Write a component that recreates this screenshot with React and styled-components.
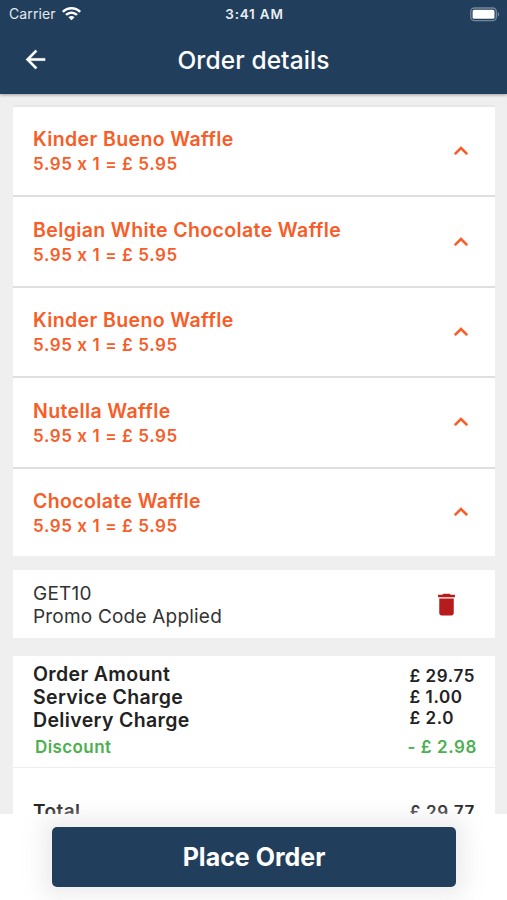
import styled, { createGlobalStyle } from "styled-components";

const items = [
      "Kinder Bueno Waffle",
      "Belgian White Chocolate Waffle",
      "Kinder Bueno Waffle",
      "Nutella Waffle",
      "Chocolate Waffle",
];

const App = () => {
      return (
            <Screen>
                  <GlobalStyle />
                  <Header>
                        <StatusBar>
                              <Carrier>
                                    Carrier
                                    <WifiIcon />
                              </Carrier>
                              <Clock>3:41 AM</Clock>
                              <BatteryIcon />
                        </StatusBar>
                        <NavBar>
                              <BackButton aria-label="Back">
                                    <svg width="29" height="29" viewBox="0 0 24 24" fill="#fff" stroke="#fff" strokeWidth="0.2">
                                          <path d="M20 11H7.83l5.59-5.59L12 4l-8 8 8 8 1.41-1.41L7.83 13H20v-2z" />
                                    </svg>
                              </BackButton>
                              <Title>Order details</Title>
                        </NavBar>
                  </Header>

                  <Content>
                        <ItemList>
                              {items.map((name, i) => (
                                    <Item key={i}>
                                          <ItemText>
                                                <ItemName>{name}</ItemName>
                                                <ItemPrice>5.95 x 1 = £ 5.95</ItemPrice>
                                          </ItemText>
                                          <svg width="28" height="28" viewBox="0 0 24 24" fill="#f85c27" stroke="#f85c27" strokeWidth="0.2">
                                                <path d="M12 8l-6 6 1.41 1.41L12 10.83l4.59 4.58L18 14z" />
                                          </svg>
                                    </Item>
                              ))}
                        </ItemList>

                        <Promo>
                              <div>
                                    <PromoText $spacing="0.25px">GET10</PromoText>
                                    <PromoText $spacing="0.2px">Promo Code Applied</PromoText>
                              </div>
                              <svg width="29" height="29" viewBox="0 0 24 24" fill="#b71c1c">
                                    <path d="M6 19c0 1.1.9 2 2 2h8c1.1 0 2-.9 2-2V7H6v12zM19 4h-3.5l-1-1h-5l-1 1H5v2h14V4z" />
                              </svg>
                        </Promo>

                        <Summary>
                              <Charges>
                                    <Labels>
                                          <li>Order Amount</li>
                                          <li>Service Charge</li>
                                          <li>Delivery Charge</li>
                                    </Labels>
                                    <Amounts>
                                          <li>£ 29.75</li>
                                          <li>£ 1.00</li>
                                          <li>£ 2.0</li>
                                    </Amounts>
                              </Charges>
                              <Discount>
                                    <span>Discount</span>
                                    <Amount>- £ 2.98</Amount>
                              </Discount>
                              <Total>
                                    <span>Total</span>
                                    <Amount>£ 29.77</Amount>
                              </Total>
                        </Summary>
                  </Content>

                  <Footer>
                        <OrderButton>Place Order</OrderButton>
                  </Footer>
            </Screen>
      );
};

const WifiIcon = () => (
      <svg width="19" height="14" viewBox="0 0 19 14" fill="#fff">
            <path d="M9.5 0C5.9 0 2.6 1.4.2 3.7c-.2.2-.2.4 0 .6l1.1 1.1c.2.2.4.2.6 0C3.9 3.5 6.6 2.4 9.5 2.4s5.6 1.1 7.6 3c.2.2.4.2.6 0l1.1-1.1c.2-.2.2-.4 0-.6C16.4 1.4 13.1 0 9.5 0z" />
            <path d="M9.5 4.4c-2.3 0-4.4.9-6 2.4-.2.2-.2.4 0 .6l1.2 1.2c.1.1.4.1.5 0 1.2-1.1 2.7-1.7 4.3-1.7s3.1.6 4.3 1.7c.1.1.4.1.5 0l1.2-1.2c.2-.2.2-.4 0-.6-1.6-1.5-3.7-2.4-6-2.4z" />
            <path d="M9.5 8.9c-1.1 0-2 .4-2.8 1-.2.2-.2.4 0 .6l2.5 2.6c.2.2.4.2.6 0l2.5-2.6c.2-.2.2-.4 0-.6-.8-.6-1.7-1-2.8-1z" />
      </svg>
);

const BatteryIcon = () => (
      <svg width="30" height="15" viewBox="0 0 31 15" fill="none">
            <rect x="0.8" y="0.8" width="26.4" height="13" rx="3.8" stroke="#74869a" strokeWidth="1.4" />
            <rect x="2.7" y="2.7" width="22.6" height="9.2" rx="1.6" fill="#fff" />
            <path d="M28.7 4.9c2 .9 2 3.9 0 4.8z" fill="#74869a" />
      </svg>
);

const GlobalStyle = createGlobalStyle`
      * {
            box-sizing: border-box;
      }

      body {
            margin: 0;
            font-family: Inter, "Liberation Sans", sans-serif;
            font-feature-settings: "calt" 0;
      }

      ul {
            margin: 0;
            padding: 0;
            list-style: none;
      }

      svg {
            display: block;
            flex-shrink: 0;
      }
`;

const Screen = styled.div`
      display: flex;
      flex-direction: column;
      height: 900px;
      overflow: hidden;
      background: #efefef;
      white-space: nowrap;
`;

const Header = styled.header`
      position: relative;
      z-index: 1;
      flex-shrink: 0;
      height: 93.5px;
      background: #213f5d;
      color: #fff;
      box-shadow: 0 1px 3px rgba(0, 0, 0, 0.35);
`;

const StatusBar = styled.div`
      display: grid;
      grid-template-columns: 1fr auto 1fr;
      align-items: center;
      height: 26px;
      padding: 0 7px 0 9px;

      > :last-child {
            justify-self: end;
      }
`;

const Carrier = styled.div`
      display: flex;
      align-items: center;
      gap: 6px;
      color: #e4e9ee;
      font-size: 14px;
      letter-spacing: 0.1px;
      line-height: 28px;
`;

const Clock = styled.div`
      font-size: 13.5px;
      font-weight: 600;
      line-height: 28px;
      letter-spacing: 0.8px;
      color: #e9edf1;
`;

const NavBar = styled.div`
      display: grid;
      grid-template-columns: 1fr auto 1fr;
      align-items: center;
      height: 67px;
      padding: 0 21px;
`;

const BackButton = styled.button`
      width: 29px;
      padding: 0;
      border: 0;
      background: none;
`;

const Title = styled.h1`
      margin: 0;
      font-size: 24.5px;
      font-weight: 500;
      line-height: 30px;
      letter-spacing: 0.1px;
`;

const Content = styled.main`
      flex: 1;
      min-height: 0;
      overflow: hidden;
      padding: 11.5px 12px 0 13px;
`;

const ItemList = styled.section`
      border-top: 2px solid #e7e7e7;
`;

const Item = styled.div`
      display: flex;
      align-items: center;
      justify-content: space-between;
      height: 90.4px;
      padding: 0 20px;
      border-bottom: 2.4px solid #dfdfdf;
      background: #fff;

      &:last-child {
            height: 87.8px;
            border-bottom: 0;
      }
`;

const ItemText = styled.div`
      padding-top: 1.4px;
`;

const ItemName = styled.div`
      color: #f85c27;
      font-size: 19.5px;
      font-weight: 600;
      line-height: 26px;
      letter-spacing: 0.38px;
`;

const ItemPrice = styled.div`
      color: #f85c27;
      font-size: 17px;
      font-weight: 600;
      line-height: 25px;
      letter-spacing: 0.6px;
`;

const Promo = styled.section`
      display: flex;
      align-items: center;
      justify-content: space-between;
      height: 68px;
      margin-top: 14px;
      padding: 0 34px 0 20px;
      background: #fff;

      > div {
            padding-top: 1px;
      }
`;

const PromoText = styled.div`
      color: #333;
      font-size: 19px;
      line-height: 23px;
      letter-spacing: ${(props) => props.$spacing};
`;

const Summary = styled.section`
      margin-top: 18px;
      height: 200px;
      background: #fff;
      color: #222;
      font-weight: 600;
`;

const Charges = styled.div`
      display: flex;
      justify-content: space-between;
      padding: 6.8px 20px 0;
`;

const Labels = styled.ul`
      font-size: 19.5px;
      line-height: 23px;
      letter-spacing: 0.35px;
`;

const Amounts = styled.ul`
      padding-top: 3px;
      font-size: 17px;
      line-height: 21px;
      letter-spacing: 0.6px;
`;

const Discount = styled.div`
      display: flex;
      justify-content: space-between;
      height: 36px;
      padding: 4px 18px 0 22px;
      border-bottom: 1px solid #eee;
      color: #4caf50;
      font-size: 17px;
      line-height: 23px;
      letter-spacing: 0.4px;
`;

const Total = styled.div`
      display: flex;
      justify-content: space-between;
      padding: 31px 20px 0;
      font-size: 19px;
      line-height: 26px;
      letter-spacing: 0.4px;
`;

const Amount = styled.span`
      font-size: 17px;
      letter-spacing: 0.6px;
`;

const Footer = styled.footer`
      position: relative;
      flex-shrink: 0;
      height: 86px;
      padding: 13px 51px 0 52px;
      background: #fff;
`;

const OrderButton = styled.button`
      display: block;
      width: 100%;
      height: 60px;
      padding: 0;
      border: 0;
      border-radius: 5px;
      background: #213f5d;
      box-shadow: 0 0 20px 10px rgba(236, 236, 236, 0.9);
      color: #fff;
      font-family: inherit;
      font-size: 25px;
      font-weight: 700;
`;

export default App;
